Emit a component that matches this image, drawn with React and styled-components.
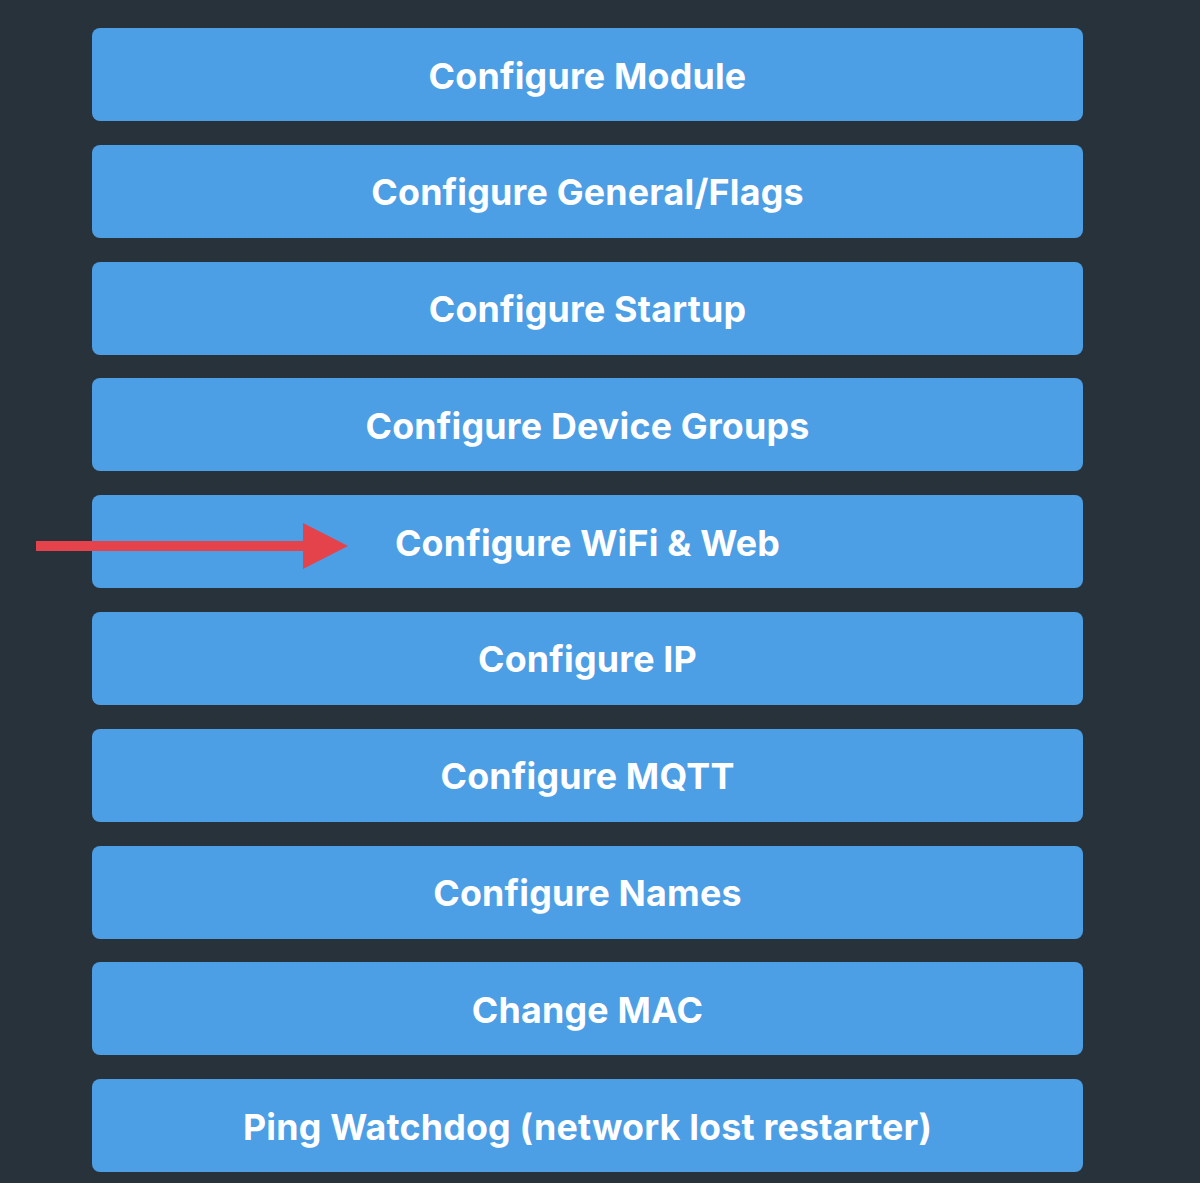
import React from 'react'
import styled, { createGlobalStyle } from 'styled-components';

const GlobalStyle = createGlobalStyle`
  html, body {
    margin: 0;
    padding: 0;
    background: #27323a;
  }
  body {
    font-family: Inter, "Liberation Sans", sans-serif;
  }
`;

const Page = styled.div`
  width: 1200px;
  height: 1183px;
  box-sizing: border-box;
  padding: 28px 0 0 92px;
  background: #27323a;
  overflow: hidden;
`;

const Menu = styled.div`
  display: flex;
  flex-direction: column;
  gap: 23.8px;
  width: 991px;
`;

const MenuButton = styled.div`
  position: relative;
  height: 93px;
  box-sizing: border-box;
  padding-top: 2px;
  display: flex;
  align-items: center;
  justify-content: center;
  background: #4c9ee5;
  border-radius: 8px;
  color: #ffffff;
  font-size: 35.8px;
  font-weight: 700;
  letter-spacing: 0.2px;
`;

const Arrow = styled.svg`
  position: absolute;
  left: -56px;
  top: 50%;
  margin-top: -19px;
  width: 314px;
  height: 46px;
  overflow: visible;
`;

const items = [
    'Configure Module',
    'Configure General/Flags',
    'Configure Startup',
    'Configure Device Groups',
    'Configure WiFi & Web',
    'Configure IP',
    'Configure MQTT',
    'Configure Names',
    'Change MAC',
    'Ping Watchdog (network lost restarter)',
];

const App = () => {
    return (
        <Page>
            <GlobalStyle />
            <Menu>
                {
                    items.map((label) => (
                        <MenuButton key={label}>
                            {label === 'Configure WiFi & Web' && (
                                <Arrow viewBox="0 0 314 46">
                                    <rect x="0" y="18" width="270" height="10" fill="#e5434b" />
                                    <polygon points="267,0 312,23 267,46" fill="#e5434b" />
                                </Arrow>
                            )}
                            {label}
                        </MenuButton>
                    ))
                }
            </Menu>
        </Page>
    )
};

export default App;
